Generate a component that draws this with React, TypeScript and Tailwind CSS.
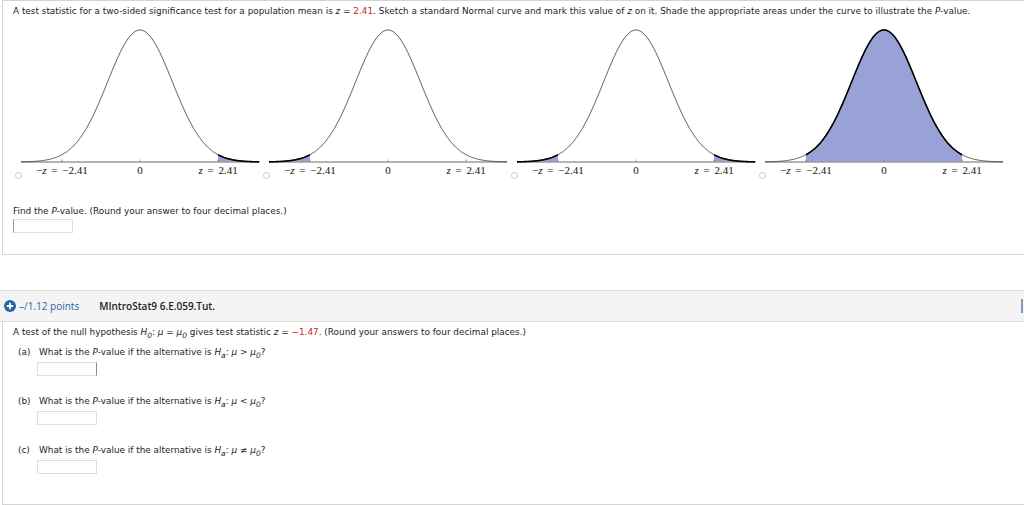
import React from 'react';

const S = 32.4;
const CX = 119;
const AX = 137;
const H = 331;

const pdf = (z: number) => Math.exp(-(z * z) / 2) / Math.sqrt(2 * Math.PI);
const px = (z: number) => CX + z * S;
const py = (z: number) => AX - pdf(z) * H;

const curve = (a: number, b: number) => {
  const pts: string[] = [];
  const n = 120;
  for (let i = 0; i <= n; i++) {
    const z = a + ((b - a) * i) / n;
    pts.push(`${px(z).toFixed(2)},${py(z).toFixed(2)}`);
  }
  return pts;
};

const area = (a: number, b: number) => {
  const pts = curve(a, b);
  return `M${px(a).toFixed(2)},${AX} L${pts.join(' L')} L${px(b).toFixed(2)},${AX} Z`;
};

const line = (a: number, b: number) => `M${curve(a, b).join(' L')}`;

type Shade = [number, number][];

const NormalCurve: React.FC<{ shade: Shade }> = ({ shade }) => (
  <svg width="240" height="156" viewBox="0 0 240 156" className="block">
    {shade.map(([a, b], i) => (
      <path key={'f' + i} d={area(a, b)} fill="#98a2d7" />
    ))}
    <line x1="0" y1={AX} x2="238" y2={AX} stroke="#9b9b9b" strokeWidth="1.6" />
    <path d={line(-3.68, 3.68)} fill="none" stroke="#3a3a3a" strokeWidth="0.8" />
    {shade.map(([a, b], i) => (
      <path key={'s' + i} d={line(a, b)} fill="none" stroke="#000" strokeWidth="1.6" />
    ))}
    {[-2.41, 0, 2.41].map((z) => (
      <line key={z} x1={px(z)} y1={AX - 2.5} x2={px(z)} y2={AX} stroke="#777" strokeWidth="0.8" />
    ))}
    <g fontFamily="'Liberation Serif', serif" fontSize="11" fill="#111" textAnchor="middle">
      <text x={px(-2.41)} y="149" wordSpacing="2">
        −<tspan fontStyle="italic">z</tspan> = −2.41
      </text>
      <text x={px(0)} y="149">0</text>
      <text x={px(2.41)} y="149" wordSpacing="2">
        <tspan fontStyle="italic">z</tspan> = 2.41
      </text>
    </g>
  </svg>
);

const Radio = () => (
  <span className="mb-[2px] block h-[7px] w-[7px] shrink-0 rounded-full border border-[#c8c8c8] bg-white" />
);

const charts: Shade[] = [
  [[2.41, 3.68]],
  [[-3.68, -2.41]],
  [[-3.68, -2.41], [2.41, 3.68]],
  [[-2.41, 2.41]],
];

const Hsub: React.FC<{ s: string }> = ({ s }) => (
  <>
    <i>H</i>
    <sub className="relative top-[2.5px] align-baseline text-[7.5px] italic">{s}</sub>
  </>
);

const Mu0 = () => (
  <>
    <i>μ</i>
    <sub className="relative top-[2.5px] align-baseline text-[7.5px] italic">0</sub>
  </>
);

const Box: React.FC<{ className?: string }> = ({ className }) => (
  <div className={'h-[14px] w-[60px] border border-[#dedede] bg-white ' + (className ?? '')} />
);

export default function App() {
  return (
    <div
      className="h-[505px] w-[1024px] overflow-hidden bg-white text-[8.9px] text-[#1e1e1e]"
      style={{ fontFamily: "'DejaVu Sans', Verdana, sans-serif" }}
    >
      <div className="ml-[2px] h-[255px] border-b border-l border-t border-[#d4d4d4] pl-[10px] pt-[4px]">
        <p className="leading-[12px]">
          A test statistic for a two-sided significance test for a population mean is <i>z</i> ={' '}
          <span className="text-[#c8242b]">2.41</span>. Sketch a standard Normal curve and mark this value of{' '}
          <i>z</i> on it. Shade the appropriate areas under the curve to illustrate the <i>P</i>-value.
        </p>
        <div className="mt-[8px] ml-[2px] flex gap-[2px]">
          {charts.map((c, i) => (
            <div key={i} className="flex items-end">
              <Radio />
              <div className="-ml-[1px]">
                <NormalCurve shade={c} />
              </div>
            </div>
          ))}
        </div>
        <p className="mt-[24px] leading-[12px]">
          Find the <i>P</i>-value. (Round your answer to four decimal places.)
        </p>
        <Box className="mt-[2px] border-l-[#9a9a9a]" />
      </div>

      <div className="mt-[35px] flex h-[32px] items-center border-y border-[#dcdcdc] bg-[#f4f4f4] pl-[4px]">
        <svg width="12" height="12" viewBox="0 0 12 12" className="shrink-0">
          <circle cx="6" cy="6" r="6" fill="#2a64a8" />
          <path d="M6 2.8v6.4M2.8 6h6.4" stroke="#fff" strokeWidth="1.8" />
        </svg>
        <span
          className="ml-[3px] text-[10px] text-[#2a64a8]"
          style={{ fontFamily: "'Open Sans', sans-serif" }}
        >
          –/1.12 points
        </span>
        <span
          className="ml-[20px] text-[10px] font-semibold text-[#222]"
          style={{ fontFamily: "'Open Sans', sans-serif" }}
        >
          MIntroStat9 6.E.059.Tut.
        </span>
        <span className="ml-auto mr-[1px] h-[14px] w-[2px] bg-[#7d9ac0]" />
      </div>

      <div className="ml-[2px] h-[183px] border-b border-l border-[#d4d4d4] pl-[10px] pt-[4px]">
        <p className="leading-[12px]">
          A test of the null hypothesis <Hsub s="0" />: <i>μ</i> = <Mu0 /> gives test statistic <i>z</i> ={' '}
          <span className="text-[#c8242b]">−1.47</span>. (Round your answers to four decimal places.)
        </p>
        <div className="ml-[5px] mt-[8px] flex flex-col">
          {[
            { l: '(a)', op: '>', dark: true },
            { l: '(b)', op: '<', dark: false },
            { l: '(c)', op: '≠', dark: false },
          ].map((q, i) => (
            <div key={q.l} className={i > 0 ? 'mt-[19px]' : ''}>
              <p className="flex leading-[12px]">
                <span className="w-[21px]">{q.l}</span>
                <span>
                  What is the <i>P</i>-value if the alternative is <Hsub s="a" />: <i>μ</i> {q.op} <Mu0 />?
                </span>
              </p>
              <Box className={'ml-[19px] mt-[4px] ' + (q.dark ? 'border-r-[#8c8c8c]' : '')} />
            </div>
          ))}
        </div>
      </div>
    </div>
  );
}
